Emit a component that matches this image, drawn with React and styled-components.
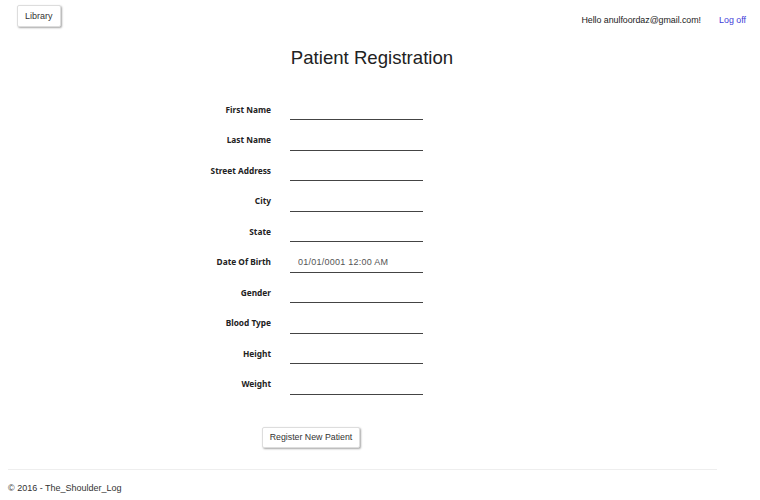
import React from "react";
import styled, { createGlobalStyle } from "styled-components";

const Global = createGlobalStyle`
  html, body { margin: 0; padding: 0; background: #fff; }
  body { font-family: "Liberation Sans", Arial, sans-serif; color: #333; }
`;

const Page = styled.div`
  width: 760px;
  height: 500px;
  overflow: hidden;
`;

const NavBar = styled.div`
  height: 32px;
  display: flex;
  align-items: flex-start;
  padding: 0 14px 0 17px;
`;

const NavButton = styled.button`
  margin-top: 5px;
  height: 22px;
  padding: 0 7px;
  font-family: "Liberation Sans", Arial, sans-serif;
  font-size: 9px;
  color: #333;
  background: #fff;
  border: 1px solid #ddd;
  border-radius: 2px;
  box-shadow: 1px 1px 2px rgba(0, 0, 0, 0.35);
`;

const NavRight = styled.div`
  margin-left: auto;
  display: flex;
  gap: 18px;
  align-items: center;
  height: 40px;
  font-size: 8.9px;
`;

const Greeting = styled.span`
  color: #222;
  letter-spacing: -0.05px;
`;

const NavLink = styled.a`
  color: #4040d8;
  text-decoration: none;
`;

const Title = styled.h2`
  width: 744px;
  margin: 15px 0 0;
  text-align: center;
  font-weight: 400;
  font-size: 18.6px;
  line-height: 22px;
  color: #222;
`;

const Form = styled.div`
  margin-top: 26px;
  padding-left: 121px;
`;

const Row = styled.div`
  display: grid;
  grid-template-columns: 150px 133px;
  column-gap: 19px;
  align-items: center;
  height: 30.5px;
`;

const Label = styled.label`
  margin-bottom: 2px;
  text-align: right;
  font-family: "Noto Sans", "Open Sans", sans-serif;
  font-weight: 700;
  font-size: 8.3px;
  color: #222;
`;

const Input = styled.input`
  box-sizing: border-box;
  width: 133px;
  height: 20px;
  border: none;
  border-bottom: 1px solid #444;
  padding: 0 8px;
  font-family: "Liberation Sans", Arial, sans-serif;
  font-size: 9px;
  letter-spacing: 0.25px;
  color: #555;
  background: transparent;
  outline: none;
`;

const ButtonRow = styled.div`
  margin-top: 26px;
  padding-left: 262px;
`;

const SubmitButton = styled.button`
  width: 98px;
  height: 21px;
  padding: 0;
  font-family: "Liberation Sans", Arial, sans-serif;
  font-size: 8.8px;
  color: #333;
  background: #fff;
  border: 1px solid #ddd;
  border-radius: 2px;
  box-shadow: 1px 1px 2px rgba(0, 0, 0, 0.35);
`;

const Rule = styled.hr`
  margin: 21px 0 0 8px;
  width: 709px;
  border: none;
  border-top: 1px solid #eee;
`;

const Footer = styled.p`
  margin: 11px 0 0 8px;
  font-size: 9px;
  line-height: 14px;
  color: #333;
`;

const fields = [
  ["First Name", ""],
  ["Last Name", ""],
  ["Street Address", ""],
  ["City", ""],
  ["State", ""],
  ["Date Of Birth", "01/01/0001 12:00 AM"],
  ["Gender", ""],
  ["Blood Type", ""],
  ["Height", ""],
  ["Weight", ""],
];

export default function App() {
  return (
    <Page>
      <Global />
      <NavBar>
        <NavButton>Library</NavButton>
        <NavRight>
          <Greeting>Hello anulfoordaz@gmail.com!</Greeting>
          <NavLink href="#">Log off</NavLink>
        </NavRight>
      </NavBar>
      <Title>Patient Registration</Title>
      <Form>
        {fields.map(([label, value]) => (
          <Row key={label}>
            <Label>{label}</Label>
            <Input defaultValue={value} />
          </Row>
        ))}
      </Form>
      <ButtonRow>
        <SubmitButton>Register New Patient</SubmitButton>
      </ButtonRow>
      <Rule />
      <Footer>© 2016 - The_Shoulder_Log</Footer>
    </Page>
  );
}
